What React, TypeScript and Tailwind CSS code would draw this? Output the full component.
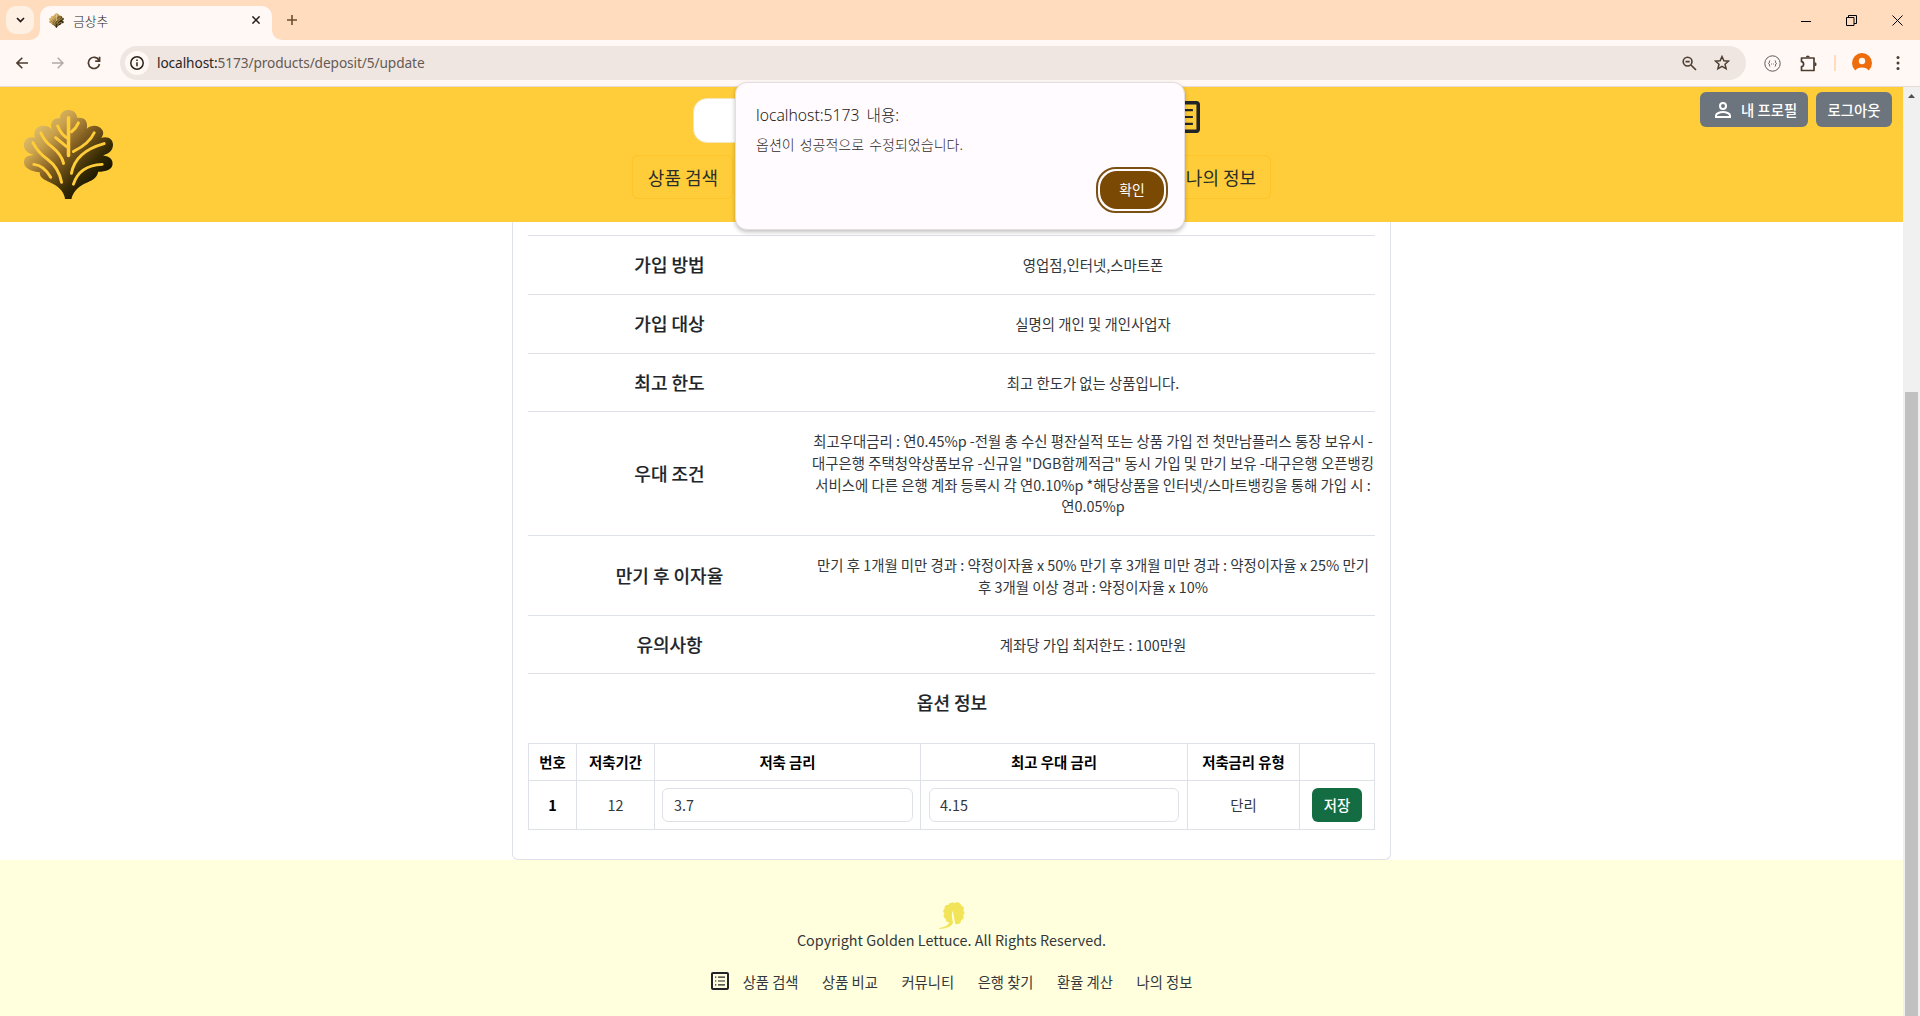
import React from "react";

const kr = "font-['Noto_Sans_CJK_KR',sans-serif]";

function Leaf({ className, id, vein }: { className: string; id: string; vein: string }) {
  return (
    <svg viewBox="0 0 92 92" className={className}>
      <defs>
        <linearGradient id={id} x1="0.1" y1="0.15" x2="0.8" y2="0.85">
          <stop offset="0" stopColor="#e3c470" />
          <stop offset="0.25" stopColor="#c8a04c" />
          <stop offset="0.5" stopColor="#856021" />
          <stop offset="0.8" stopColor="#352a03" />
          <stop offset="1" stopColor="#171300" />
        </linearGradient>
      </defs>
      <path
        fill={`url(#${id})`}
        d="M42.500 91C42 85 37 79 31 76C23 72 16 70 17 64C9 63 1 60 1 54C1 49 4 47 11 46.500C4 45 0 40 1 35C2 30 6 27.500 12 29C10 22 14 17 20 17C24 17 27 18 29 21C27 14 30 9 37 9.500C38 3 42 1 46 1C51 1 54 4 55 9C62 8 66 12 64.500 20C70 15 77 17 80 21C82 24 81 27 79 29C87 27 91 31 91 36C91 42 87 45 81 47C88 48 91 51 90.500 56C90 61 84 63 76 63.500C75 70 69 73 62 75.500C55 79 50 85 49 91Z"
      />
      <g fill="none" stroke={vein} strokeWidth="3" strokeLinecap="round">
        <path d="M46 9V47" strokeWidth="3.600" />
        <path d="M35 17Q38 25 44 29M56 14Q54 19 49 23M33 29L44 38" />
        <path d="M18 24Q22 33 29 38Q39 46 41 55" />
        <path d="M72 24Q67 35 51 43" />
        <path d="M10 34Q15 44 25 51Q36 59 39 74" />
        <path d="M82 35Q53 43 49 65" />
        <path d="M11 56Q21 57 28 69" />
        <path d="M80 56Q57 57 51 76" />
      </g>
    </svg>
  );
}

function ListIcon({ className }: { className: string }) {
  return (
    <svg viewBox="0 0 18 18" className={className} fill="#212529">
      <path d="M16.1 0H1.9C.8 0 0 .8 0 1.900v14.200C0 17.200.8 18 1.900 18h14.200c1.100 0 1.900-.8 1.900-1.900V1.900C18 .8 17.200 0 16.100 0zM16 16H2V2h14v14zM4 4.500h1.300v1.200H4zm3 0h7v1.200H7zM4 8.400h1.300v1.200H4zm3 0h7v1.200H7zM4 12.300h1.300v1.200H4zm3 0h7v1.200H7z" />
    </svg>
  );
}

function TabStrip() {
  return (
    <div className="flex h-10 items-end bg-[#fedcbd]">
      <div className="mb-[6px] ml-[6px] flex size-7 items-center justify-center rounded-[10px] bg-[#fff0e4]">
        <svg viewBox="0 0 8 6" className="h-[6px] w-[9px]" fill="none" stroke="#221a14" strokeWidth="1.700"><path d="M.5 1L4 4.500L7.500 1" /></svg>
      </div>
      <div className="relative ml-[6px] flex h-[34px] w-[232px] items-center rounded-t-[10px] bg-[#fff8f5]">
        <svg viewBox="0 0 10 10" className="absolute -left-[10px] bottom-0 size-[10px]" fill="#fff8f5"><path d="M10 0v10H0A10 10 0 0 0 10 0z" /></svg>
        <svg viewBox="0 0 10 10" className="absolute -right-[10px] bottom-0 size-[10px]" fill="#fff8f5"><path d="M0 0v10h10A10 10 0 0 1 0 0z" /></svg>
        <Leaf id="tab-leaf" vein="#f3e3b8" className="mb-[5px] ml-[9px] size-[15px]" />
        <span className="mb-1 ml-[9px] text-[12.800px] font-light text-[#1c1c1c]">금상추</span>
        <svg viewBox="0 0 8 8" className="mb-[6px] ml-auto mr-[12px] size-2" stroke="#221a14" strokeWidth="1.500"><path d="M.4.4l7.200 7.200M7.600.4L.4 7.600" /></svg>
      </div>
      <svg viewBox="0 0 10 10" className="mb-[15px] ml-[15px] size-[10px]" stroke="#6b4d2e" strokeWidth="1.600"><path d="M5 0v10M0 5h10" /></svg>
      <div className="mb-[14px] ml-auto mr-[17px] flex items-center gap-[35px] text-black">
        <svg viewBox="0 0 10 11" className="h-[11px] w-[10px]" stroke="currentColor"><path d="M0 6.500h10" /></svg>
        <svg viewBox="0 0 11 11" className="h-[11px] w-[11px]" fill="none" stroke="currentColor"><path d="M.5 2.500h7.500v8H.5zM2.500 2.500v-2h8v8H8" /></svg>
        <svg viewBox="0 0 11 11" className="h-[11px] w-[11px]" stroke="currentColor"><path d="M.5.5l10 10M10.500.5l-10 10" /></svg>
      </div>
    </div>
  );
}

function Toolbar() {
  return (
    <div className="flex h-[47px] items-center border-b border-[#e8dcd2] bg-[#fff8f5]">
      <svg viewBox="0 0 12 12" className="ml-4 size-3" fill="none" stroke="#4d3d30" strokeWidth="1.600"><path d="M12 6H1M6.300.7L1 6l5.300 5.300" /></svg>
      <svg viewBox="0 0 12 12" className="ml-6 size-3" fill="none" stroke="#b3a9a2" strokeWidth="1.500"><path d="M0 6h11M5.700.7L11 6l-5.300 5.300" /></svg>
      <svg viewBox="0 0 14 14" className="ml-[23px] size-[14px]" fill="none" stroke="#4d3d30" strokeWidth="1.700"><path d="M12 4.300A5.600 5.600 0 1 0 12.500 8M12.600.8v4.400H8.200" /></svg>
      <div className="ml-[19px] flex h-[34px] w-[1626px] items-center rounded-full bg-[#efe6e2]">
        <div className="ml-[5px] flex size-6 items-center justify-center rounded-full bg-[#fff8f5]">
          <svg viewBox="0 0 14 14" className="size-[14px]" fill="none" stroke="#2c211a" strokeWidth="1.500"><circle cx="7" cy="7" r="6.200" /><path d="M7 6.200v4M7 3.500v1.500" /></svg>
        </div>
        <span className="ml-2 mt-px font-['Noto_Sans',sans-serif] text-[13.700px] tracking-[-0.1px] text-[#655b54]"><span className="text-[#2b2522]">localhost:</span>5173/products/deposit/5/update</span>
        <svg viewBox="0 0 15 15" className="ml-auto size-[15px]" fill="none" stroke="#4d3d30" strokeWidth="1.600"><circle cx="5.600" cy="5.600" r="4.400" /><path d="M9 9l5 5M3.500 5.600h4.200" /></svg>
        <svg viewBox="0 0 16 16" className="ml-[17px] mr-4 size-4" fill="none" stroke="#4d3d30" strokeWidth="1.500"><path d="M8 1.600l1.900 4.200 4.600.4-3.500 3.100 1.100 4.500L8 11.400l-4.100 2.400L5 9.300 1.500 6.200l4.600-.4z" /></svg>
      </div>
      <svg viewBox="0 0 17 17" className="ml-[18px] size-[17px]" fill="none" stroke="#5a5a5a"><circle cx="8.500" cy="8.500" r="7.700" /><path d="M6.200 5.500c-1.500 0 0 2.500-1.700 3 1.700.5.200 3 1.700 3M10.800 5.500c1.500 0 0 2.500 1.700 3-1.700.5-.2 3-1.700 3M7.200 9h.8M9 9h.8" /></svg>
      <svg viewBox="0 0 17 17" className="ml-[19px] size-[17px]" fill="none" stroke="#4d3d30" strokeWidth="1.700"><path d="M1.500 3h12.500v12.500h-12.500v-3.800c2.800-.4 2.800-4.600 0-5z" strokeLinejoin="round" /><path d="M5.800 2.200a2 1.800 0 0 1 4 0zM14.800 7.200a1.800 2 0 0 1 0 4z" fill="#4d3d30" stroke="none" /></svg>
      <div className="ml-[17px] h-4 w-[1.500px] bg-[#fedcbd]" />
      <svg viewBox="0 0 20 20" className="ml-4 size-5"><circle cx="10" cy="10" r="10" fill="#ee6c0b" /><circle cx="10" cy="8" r="3.200" fill="#fff8f5" /><path d="M3.500 17.600C5 13.600 15 13.600 16.500 17.600V20h-13z" fill="#fff8f5" /></svg>
      <svg viewBox="0 0 4 16" className="ml-6 h-4 w-1" fill="#4d3d30"><circle cx="2" cy="2.500" r="1.500" /><circle cx="2" cy="8" r="1.500" /><circle cx="2" cy="13.500" r="1.500" /></svg>
    </div>
  );
}

function SiteHeader() {
  return (
    <header className="relative flex h-[135px] shrink-0 bg-[#ffcd39]">
      <Leaf id="site-leaf" vein="#ffcd39" className="ml-[23px] mt-[22px] size-[91px]" />
      <div className="ml-[518px] flex w-[639px] flex-col">
        <div className="ml-[61px] mt-[11px] flex items-start">
          <div className="h-[45px] w-[440px] rounded-[14px] border border-[#f3e6bd] bg-white" />
          <ListIcon className="ml-[35px] mt-[3px] size-8" />
        </div>
        <div className="mt-[12px] flex justify-between">
          <div className="flex h-[44px] w-[101px] items-center justify-center rounded-md border border-[#fdc528] pl-px text-[18px] text-[#2b2d2b]">상품 검색</div>
          <div className="flex h-[44px] w-[101px] items-center justify-center rounded-md border border-[#fdc528] pl-px text-[18px] text-[#2b2d2b]">나의 정보</div>
        </div>
      </div>
      <div className="ml-auto mr-[11px] mt-[5px] flex gap-2 text-[14.400px] text-white">
        <div className="flex h-[35px] w-[108px] items-center rounded-md bg-[#6c757d] pl-[15px] font-medium">
          <svg viewBox="0 0 16 16" className="size-4" fill="none" stroke="white" strokeWidth="2"><circle cx="8" cy="4" r="3" /><path d="M1 15v-1.500C1 11.500 5 10 8 10s7 1.500 7 3.500V15z" /></svg>
          <span className="ml-[10px]">내 프로필</span>
        </div>
        <div className="flex h-[35px] w-[76px] items-center justify-center rounded-md bg-[#6c757d] font-medium">로그아웃</div>
      </div>
    </header>
  );
}

function AlertDialog() {
  return (
    <div className="absolute left-[735px] top-[82px] flex h-[148px] w-[450px] flex-col rounded-xl border border-[#e6dde0] bg-[#fffbff] pl-[20px] pr-[16px] shadow-[0_2px_4px_rgba(0,0,0,0.25)]">
      <p className="mt-[20px] whitespace-pre font-['Noto_Sans','Noto_Sans_CJK_KR',sans-serif] text-[15.700px] font-light leading-6 text-[#1f1b16] [word-spacing:3px]">localhost:5173 내용:</p>
      <p className="mt-[7px] text-[14px] font-light leading-5 text-[#2f2b26] [word-spacing:2px]">옵션이 성공적으로 수정되었습니다.</p>
      <div className="ml-auto mt-[13px] flex h-[46px] w-[72px] items-center justify-center rounded-[20px] border-2 border-[#7b5113]">
        <div className="flex h-[38px] w-[64px] items-center justify-center rounded-[17px] bg-[#7a4a05] pb-px text-[13.800px] text-white">확인</div>
      </div>
    </div>
  );
}

const rows: { label: string; height: string; lines: string[] }[] = [
  { label: "가입 방법", height: "h-[59px]", lines: ["영업점,인터넷,스마트폰"] },
  { label: "가입 대상", height: "h-[59px]", lines: ["실명의 개인 및 개인사업자"] },
  { label: "최고 한도", height: "h-[58px]", lines: ["최고 한도가 없는 상품입니다."] },
  {
    label: "우대 조건",
    height: "h-[124px]",
    lines: [
      "최고우대금리 : 연0.45%p -전월 총 수신 평잔실적 또는 상품 가입 전 첫만남플러스 통장 보유시 -",
      "대구은행 주택청약상품보유 -신규일 \"DGB함께적금\" 동시 가입 및 만기 보유 -대구은행 오픈뱅킹",
      "서비스에 다른 은행 계좌 등록시 각 연0.10%p *해당상품을 인터넷/스마트뱅킹을 통해 가입 시 :",
      "연0.05%p",
    ],
  },
  {
    label: "만기 후 이자율",
    height: "h-[80px]",
    lines: [
      "만기 후 1개월 미만 경과 : 약정이자율 x 50% 만기 후 3개월 미만 경과 : 약정이자율 x 25% 만기",
      "후 3개월 이상 경과 : 약정이자율 x 10%",
    ],
  },
  { label: "유의사항", height: "h-[58px]", lines: ["계좌당 가입 최저한도 : 100만원"] },
];

function ProductCard() {
  return (
    <section className="mx-auto flex h-[638px] w-[879px] shrink-0 flex-col rounded-b-md border border-t-0 border-[#dee2e6] px-[15px] pt-[13px]">
      {rows.map((r) => (
        <div key={r.label} className={`${r.height} flex shrink-0 items-center border-t border-[#dee2e6] text-center text-[#212529]`}>
          <div className="w-[282px] pb-px pl-px text-[18px] font-medium [-webkit-text-stroke:0.15px_#212529]">{r.label}</div>
          <div className="w-[565px] whitespace-nowrap pl-px text-[14.400px] leading-[21.600px] text-[#33373b]">
            {r.lines.map((l) => (
              <div key={l}>{l}</div>
            ))}
          </div>
        </div>
      ))}
      <div className="flex h-[70px] shrink-0 items-start justify-center border-t border-[#dee2e6] pl-px pt-[17px] text-[18px] font-medium leading-[22px] text-[#212529] [-webkit-text-stroke:0.15px_#212529]">옵션 정보</div>
      <table className="w-[847px] table-fixed border-collapse text-center text-[14.400px] text-[#33373b] [&_td]:border [&_td]:border-[#dee2e6] [&_td]:p-0 [&_th]:border [&_th]:border-[#dee2e6] [&_th]:p-0">
        <colgroup>
          <col className="w-[48px]" />
          <col className="w-[78px]" />
          <col className="w-[266px]" />
          <col className="w-[267px]" />
          <col className="w-[112px]" />
          <col className="w-[75px]" />
        </colgroup>
        <thead>
          <tr className="h-[37px] font-bold text-black">
            <th>번호</th><th>저축기간</th><th>저축 금리</th><th>최고 우대 금리</th><th>저축금리 유형</th><th />
          </tr>
        </thead>
        <tbody>
          <tr className="h-[49px]">
            <th className="font-bold text-black">1</th>
            <td>12</td>
            <td><div className="mx-[7px] flex h-[34px] items-center rounded-md border border-[#dee2e6] pl-[11px]">3.7</div></td>
            <td><div className="mx-[8px] flex h-[34px] items-center rounded-md border border-[#dee2e6] pl-[10px]">4.15</div></td>
            <td>단리</td>
            <td><div className="mx-auto flex h-[34px] w-[50px] items-center justify-center rounded-md bg-[#146c43] font-medium text-white">저장</div></td>
          </tr>
        </tbody>
      </table>
    </section>
  );
}

const links = ["상품 검색", "상품 비교", "커뮤니티", "은행 찾기", "환율 계산", "나의 정보"];

function Footer() {
  return (
    <footer className="flex flex-1 flex-col items-center bg-[#ffffdd] text-[#33373b]">
      <svg viewBox="132 18 78 84" className="mt-[42px] h-[28px] w-[26px]" fill="#f2e459">
        <path d="M132 98C152 98 170 92 174 80C172 70 168 58 173 44C177 58 178 72 181 84C190 87 199 81 198 73C206 70 208 64 204 58C211 53 209 46 204 44C210 37 206 30 200 30C198 20 186 16 180 21C172 17 163 20 161 26C152 25 147 31 149 38C143 42 143 49 149 52C143 59 146 66 152 67C151 74 156 79 163 79C160 89 146 95 132 96Z" />
      </svg>
      <p className="-mt-px text-[14.400px] leading-[22px]">Copyright Golden Lettuce. All Rights Reserved.</p>
      <div className="mt-[19px] flex h-6 items-center text-[14.300px]">
        <ListIcon className="mb-[2px] mr-[14px] size-[18px]" />
        <div className="flex gap-[23.600px]">
          {links.map((l) => (
            <span key={l}>{l}</span>
          ))}
        </div>
      </div>
    </footer>
  );
}

export default function App() {
  return (
    <div className={`${kr} relative flex h-[1016px] w-[1920px] flex-col overflow-hidden bg-white`}>
      <TabStrip />
      <Toolbar />
      <div className="flex min-h-0 flex-1">
        <main className="flex w-[1903px] flex-col">
          <SiteHeader />
          <ProductCard />
          <Footer />
        </main>
        <div className="flex w-[17px] flex-col items-center bg-[#f0f0f0]">
          <svg viewBox="0 0 7 4" className="mt-[7px] h-[4px] w-[7px]" fill="#505050"><path d="M3.500 0L7 4H0z" /></svg>
          <div className="mt-[294px] w-[13px] flex-1 bg-[#c1c1c1]" />
        </div>
      </div>
      <AlertDialog />
    </div>
  );
}
